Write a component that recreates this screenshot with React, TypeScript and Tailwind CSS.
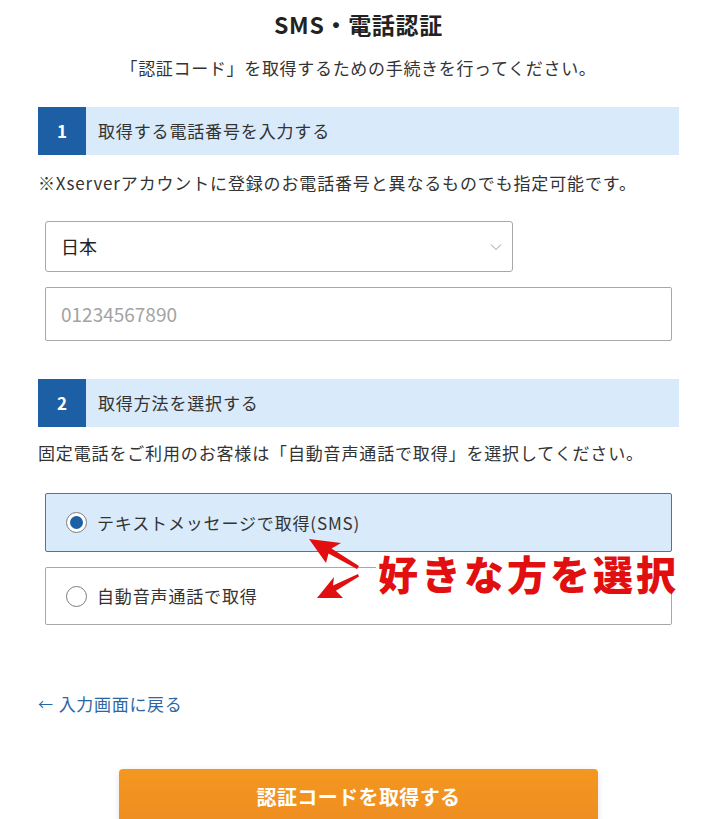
import React from "react";

function StepHeader({ num, title }: { num: string; title: string }) {
  return (
    <div className="flex h-[48px] items-stretch bg-[#d9eafa]">
      <div className="flex w-[48px] items-center justify-center bg-[#1c5fa5] text-[17px] font-bold text-white">
        {num}
      </div>
      <div className="flex items-center pl-[12px] text-[17px] tracking-[0.05em] text-[#333]">
        {title}
      </div>
    </div>
  );
}

function Radio({ checked, label }: { checked: boolean; label: string }) {
  return (
    <div
      className={
        checked
          ? "flex h-[59px] items-center gap-[10px] rounded-[2px] border border-[#4676ab] bg-[#d9eafa] pl-[20px]"
          : "flex h-[58px] items-center gap-[10px] rounded-[2px] border border-[#a8a8a8] bg-white pl-[20px]"
      }
    >
      <span className="flex h-[21px] w-[21px] items-center justify-center rounded-full border-[1.5px] border-[#7d7d7d] bg-white">
        {checked && <span className="h-[13px] w-[13px] rounded-full bg-[#1d5fa3]" />}
      </span>
      <span className="text-[17px] tracking-[0.05em] text-[#333]">{label}</span>
    </div>
  );
}

export default function App() {
  return (
    <div className="relative min-h-[819px] overflow-hidden bg-white pl-[38px] pr-[31px] pt-[8px] font-['Noto_Sans_CJK_JP','Noto_Sans',sans-serif] text-[#333]">
      {/* Title */}
      <h1 className="text-center text-[23px] font-bold leading-[32px] tracking-[0.03em] text-[#222]">
        SMS・電話認証
      </h1>
      <p className="mt-[14px] text-center text-[17px] leading-[28px] tracking-[0.04em]">
        「認証コード」を取得するための手続きを行ってください。
      </p>

      {/* Step 1 */}
      <div className="mt-[25px]">
        <StepHeader num="1" title="取得する電話番号を入力する" />
      </div>
      <p className="mt-[14px] text-[17px] leading-[28px] tracking-[0.05em]">
        ※Xserverアカウントに登録のお電話番号と異なるものでも指定可能です。
      </p>

      <div className="px-[7px]">
        <div className="mt-[24px] flex h-[51px] w-[468px] items-center justify-between rounded-[3px] border border-[#a8a8a8] pl-[15px] pr-[10px]">
          <span className="text-[18px] text-[#222]">日本</span>
          <svg width="12" height="8" viewBox="0 0 12 8" fill="none">
            <path d="M1 1.5 L6 6.5 L11 1.5" stroke="#9a9a9a" strokeWidth="1" />
          </svg>
        </div>
        <div className="mt-[15px] flex h-[54px] items-center rounded-[2px] border border-[#a8a8a8] pl-[15px]">
          <span className="text-[19px] text-[#a3a3a3]">01234567890</span>
        </div>
      </div>

      {/* Step 2 */}
      <div className="mt-[38px]">
        <StepHeader num="2" title="取得方法を選択する" />
      </div>
      <p className="mt-[12px] text-[17px] leading-[28px] tracking-[0.05em]">
        固定電話をご利用のお客様は「自動音声通話で取得」を選択してください。
      </p>

      <div className="px-[7px]">
        <div className="relative mt-[26px] flex flex-col gap-[15px]">
          <Radio checked label="テキストメッセージで取得(SMS)" />
          <Radio checked={false} label="自動音声通話で取得" />

          {/* annotation */}
          <svg
            className="absolute left-0 top-0 overflow-visible"
            width="627"
            height="132"
            viewBox="0 0 627 132"
          >
            <g transform="translate(-45 -493)" fill="#e10f0f">
              <polygon points="309,539 341,543 331.5,548.4 359,566 357,569 328.5,553.6 326,563" />
              <polygon points="317,598 334,577 333,585.6 358,574 359,576.5 335.9,590.8 343,598" />
            </g>
          </svg>
          <span className="absolute left-[331px] top-[60px] whitespace-nowrap bg-white px-[2px] text-[40px] font-black leading-[40px] tracking-[3px] text-[#e10f0f]">
            好きな方を選択
          </span>
        </div>
      </div>

      {/* back link */}
      <a className="mt-[65px] flex h-[28px] items-center gap-[5px] text-[17px] tracking-[0.04em] text-[#2c67a5]">
        <span className="text-[15px]">←</span>
        <span>入力画面に戻る</span>
      </a>

      {/* submit */}
      <div className="mt-[51px] flex justify-center">
        <button className="h-[56px] w-[479px] rounded-[4px] bg-gradient-to-b from-[#f4971f] to-[#ee8d22] text-[20px] font-bold tracking-[0.02em] text-white shadow-[0_2px_6px_rgba(0,0,0,0.12)]">
          認証コードを取得する
        </button>
      </div>
    </div>
  );
}
